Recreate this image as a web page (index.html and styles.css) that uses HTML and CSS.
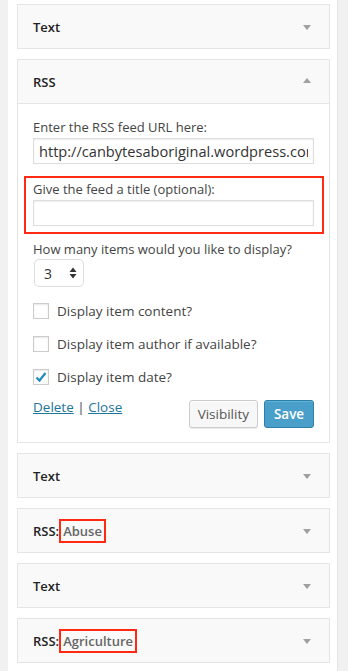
FILE: index.html
```html
<!DOCTYPE html>
<html lang="en">
<head>
    <meta charset="UTF-8">
    <title>Widgets</title>
    <link rel="stylesheet" href="styles.css">
</head>
<body>
    <div class="sidebar">
        <div class="widget">
            <div class="widget-top">
                <span class="widget-title">Text</span>
                <span class="arrow"></span>
            </div>
        </div>

        <div class="widget open">
            <div class="widget-top">
                <span class="widget-title">RSS</span>
                <span class="arrow up"></span>
            </div>
            <div class="widget-inside">
                <label class="field-label">Enter the RSS feed URL here:</label>
                <input class="text-input" type="text" value="http://canbytesaboriginal.wordpress.com/feed/">

                <div class="highlight">
                    <label class="field-label">Give the feed a title (optional):</label>
                    <input class="text-input" type="text" value="">
                </div>

                <label class="field-label count-label">How many items would you like to display?</label>
                <div class="select">
                    <span>3</span>
                    <svg width="8" height="12" viewBox="0 0 8 12"><path d="M4 0.5 L7.5 5 H0.5 Z M4 11.5 L7.5 7 H0.5 Z" fill="#333"/></svg>
                </div>

                <div class="check-list">
                    <div class="check-row"><span class="checkbox"></span>Display item content?</div>
                    <div class="check-row"><span class="checkbox"></span>Display item author if available?</div>
                    <div class="check-row">
                        <span class="checkbox">
                            <svg width="14" height="14" viewBox="0 0 14 14"><path d="M2.5 7.5 L5.5 10.5 L11.5 3" fill="none" stroke="#1e8cbe" stroke-width="2.2"/></svg>
                        </span>Display item date?
                    </div>
                </div>

                <div class="widget-controls">
                    <div class="links"><a href="#">Delete</a> | <a href="#">Close</a></div>
                    <div class="buttons">
                        <button class="btn">Visibility</button>
                        <button class="btn primary">Save</button>
                    </div>
                </div>
            </div>
        </div>

        <div class="widget">
            <div class="widget-top">
                <span class="widget-title">Text</span>
                <span class="arrow"></span>
            </div>
        </div>

        <div class="widget">
            <div class="widget-top">
                <span class="widget-title">RSS:<span class="in-title">Abuse</span></span>
                <span class="arrow"></span>
            </div>
        </div>

        <div class="widget">
            <div class="widget-top">
                <span class="widget-title">Text</span>
                <span class="arrow"></span>
            </div>
        </div>

        <div class="widget">
            <div class="widget-top">
                <span class="widget-title">RSS:<span class="in-title">Agriculture</span></span>
                <span class="arrow"></span>
            </div>
        </div>
    </div>
</body>
</html>
```

FILE: styles.css
```css
body {
    margin: 0;
    background: #f1f1f1;
    font-family: 'Open Sans', 'Liberation Sans', sans-serif;
    font-size: 13px;
    color: #444;
}

.sidebar {
    width: 330px;
    margin-left: 8px;
    min-height: 671px;
    background: #fff;
    border-right: 1px solid #e3e3e3;
    box-sizing: border-box;
    padding: 4px 7px 0 9px;
}

.widget {
    border: 1px solid #e5e5e5;
    background: #fff;
    margin-bottom: 10px;
}

.widget-top {
    height: 43px;
    background: #f9f9f9;
    display: flex;
    align-items: center;
    justify-content: space-between;
    padding: 0 18px 0 15px;
}

.widget.open .widget-top {
    border-bottom: 1px solid #e5e5e5;
}

.widget-title {
    font-weight: 600;
    color: #222;
    font-size: 13px;
    display: flex;
    align-items: center;
}

.in-title {
    color: #666;
    border: 2px solid #ff2a14;
    padding: 0 2px;
    line-height: 20px;
}

.arrow {
    width: 0;
    height: 0;
    border-left: 4px solid transparent;
    border-right: 4px solid transparent;
    border-top: 5px solid #a0a0a0;
    margin-top: 2px;
}

.arrow.up {
    border-top: none;
    border-bottom: 5px solid #a0a0a0;
    margin-top: -2px;
}

.widget-inside {
    padding: 14px 15px 14px 15px;
}

.field-label {
    display: block;
    line-height: 18px;
}

.text-input {
    display: block;
    width: 281px;
    height: 26px;
    box-sizing: border-box;
    margin: 2px 0 0 0;
    padding: 0 5px;
    border: 1px solid #ddd;
    font-family: 'Open Sans', 'Liberation Sans', sans-serif;
    font-size: 14.6px;
    color: #333;
    box-shadow: inset 0 1px 2px rgba(0, 0, 0, 0.07);
    outline: none;
}

.highlight {
    margin: 12px -10px 0 -9px;
    padding: 2px 8px 6px 7px;
    border: 2px solid #ff2a14;
}

.count-label {
    margin-top: 6px;
}

.select {
    margin-top: 1px;
    width: 50px;
    height: 28px;
    box-sizing: border-box;
    border: 1px solid #ddd;
    border-radius: 5px;
    display: flex;
    align-items: center;
    justify-content: space-between;
    padding: 0 6px 0 9px;
    font-size: 14px;
    color: #333;
    margin-left: 1px;
}

.check-list {
    margin-top: 16px;
}

.check-row {
    display: flex;
    align-items: center;
    height: 16px;
    margin-bottom: 17px;
    font-size: 13.5px;
}

.checkbox {
    width: 16px;
    height: 16px;
    box-sizing: border-box;
    border: 1px solid #ccc;
    box-shadow: inset 0 1px 2px rgba(0, 0, 0, 0.1);
    margin-right: 8px;
    display: flex;
    align-items: center;
    justify-content: center;
}

.widget-controls {
    display: flex;
    justify-content: space-between;
    align-items: flex-start;
    margin-top: -2px;
}

.links {
    font-size: 13.5px;
    margin-top: -2px;
}

.links a {
    color: #21759b;
}

.buttons {
    display: flex;
    gap: 6px;
}

.btn {
    height: 28px;
    padding: 0 8px;
    font-family: 'Open Sans', 'Liberation Sans', sans-serif;
    font-size: 13.5px;
    color: #555;
    background: #f7f7f7;
    border: 1px solid #ccc;
    border-radius: 3px;
    box-shadow: inset 0 1px 0 #fff, 0 1px 0 rgba(0, 0, 0, 0.08);
}

.btn.primary {
    width: 50px;
    padding: 0;
    font-weight: 600;
    color: #fff;
    background: #4a9fca;
    border-color: #2b7fab;
    box-shadow: inset 0 1px 0 rgba(120, 200, 230, 0.5);
}
```
